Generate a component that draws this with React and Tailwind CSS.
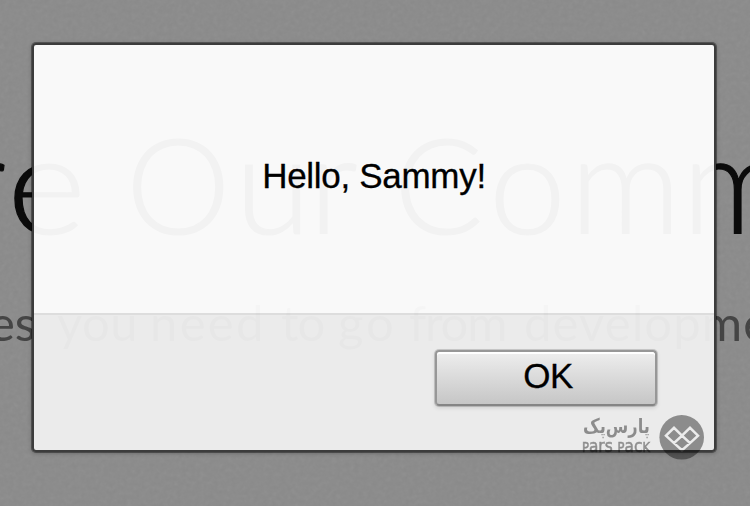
const HEADING = [
  { text: 'r', place: 'top-[115px] left-[-43px] text-[138px]' },
  { text: 'e', place: 'top-[115px] left-[7px] text-[138px] scale-x-110' },
  { text: 'O', place: 'top-[117px] left-[126px] text-[132px]' },
  { text: 'u', place: 'top-[115px] left-[235px] text-[138px]' },
  { text: 'r', place: 'top-[115px] left-[309px] text-[138px]' },
  { text: 'C', place: 'top-[117px] left-[394px] text-[132px]' },
  { text: 'o', place: 'top-[115px] left-[489px] text-[138px]' },
  { text: 'm', place: 'top-[115px] left-[570px] text-[138px]' },
  { text: 'm', place: 'top-[115px] left-[682px] text-[138px]' },
];

const SUBTITLE = [
  { text: 'es', place: 'left-[-11px]' },
  { text: 'you', place: 'left-[57px] tracking-[0.5px]' },
  { text: 'need', place: 'left-[150px] tracking-[2.3px]' },
  { text: 'to', place: 'left-[281px] tracking-[-1px]' },
  { text: 'go', place: 'left-[338px] tracking-[3px]' },
  { text: 'from', place: 'left-[409px] tracking-[-1.2px]' },
  { text: 'developme', place: 'left-[524px] tracking-[1.1px]' },
];

function Backdrop() {
  return (
    <div className="absolute inset-0 overflow-hidden font-['Lato',sans-serif]">
      <svg className="absolute inset-0 h-full w-full opacity-[0.09]">
        <filter id="grain">
          <feTurbulence type="fractalNoise" baseFrequency="0.22" numOctaves="2" />
          <feColorMatrix type="saturate" values="0" />
        </filter>
        <rect width="100%" height="100%" filter="url(#grain)" />
      </svg>
      {HEADING.map((w, i) => (
        <span key={i} className={`absolute origin-left leading-[132px] font-light whitespace-nowrap text-[#0b0b0b] [-webkit-text-stroke:1.2px_#0b0b0b] ${w.place}`}>
          {w.text}
        </span>
      ))}
      {SUBTITLE.map((w) => (
        <span key={w.text} className={`absolute top-[298px] text-[49px] leading-[49px] whitespace-nowrap text-[#454545] ${w.place}`}>
          {w.text}
        </span>
      ))}
    </div>
  );
}

function Watermark() {
  return (
    <div className="absolute left-[582px] top-[414px] flex h-[46px] w-[122px] opacity-40">
      <svg width="122" height="46" viewBox="0 0 122 46">
        <text x="68" y="19" direction="rtl" textLength="67" lengthAdjust="spacingAndGlyphs" className="font-['DejaVu_Sans',sans-serif] text-[20px] font-bold">پارس‌پک</text>
        <text x="0" y="37.500" textLength="68" lengthAdjust="spacingAndGlyphs" stroke="black" strokeWidth="0.6" className="font-['DejaVu_Sans',sans-serif] text-[18px]">
          <tspan fontSize="13.5">P</tspan>ars <tspan fontSize="13.5">P</tspan>ac<tspan fontSize="13.5">K</tspan>
        </text>
        <mask id="emblem">
          <rect width="122" height="46" fill="white" />
          <path
            d="M84 21.700L92 13.800L100 21.700L92 29.100ZM100 21.700L108 13.800L116 21.700L108 29.100ZM100 21.700L108 29.100L100 36.300L92 29.100Z"
            fill="none"
            stroke="black"
            strokeWidth="2.5"
          />
        </mask>
        <circle cx="99.700" cy="23.300" r="22.300" mask="url(#emblem)" />
      </svg>
    </div>
  );
}

export default function App() {
  return (
    <main className="relative h-[506px] w-[750px] overflow-hidden bg-[#8a8a8a] pl-[32px] pt-[43px] font-['Liberation_Sans',Arial,sans-serif] text-black">
      <Backdrop />
      <section className="relative flex h-[409px] w-[684px] flex-col overflow-hidden rounded-[4px] border-2 border-[#3c3c3c] bg-white/95 shadow-[0_0_0_1px_rgba(0,0,0,0.35),0_1px_4px_rgba(0,0,0,0.3)]">
        <div className="flex h-[268px] shrink-0 items-center justify-center">
          <p className="-mt-[7px] text-[35px] leading-[40px] tracking-[-0.3px] whitespace-nowrap [-webkit-text-stroke:0.3px_black]">Hello, Sammy!</p>
        </div>
        <footer className="flex grow justify-end border-t-2 border-black/6 bg-black/[0.055] pr-[57px] pt-[35px]">
          <button className="flex h-[56px] w-[222px] items-center justify-center rounded-[4px] border-2 border-[#979797] border-b-[#858585] bg-linear-to-b from-[#eeeeee] to-[#c6c6c6] pb-[6px] pl-[4px] text-[35px] leading-none tracking-[-0.5px] shadow-[inset_0_2px_0_#fff,0_0_0_1px_rgba(0,0,0,0.15),0_2px_4px_rgba(0,0,0,0.12)] [-webkit-text-stroke:0.3px_black]">
            OK
          </button>
        </footer>
      </section>
      <Watermark />
    </main>
  );
}
